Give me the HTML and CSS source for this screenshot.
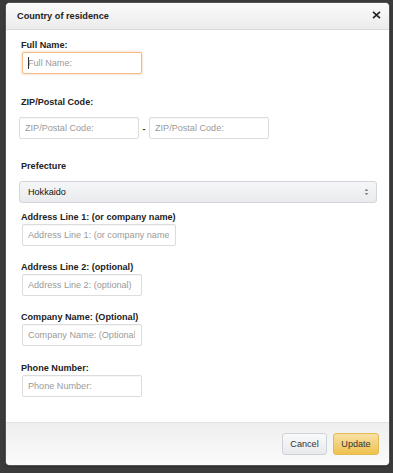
FILE: index.html
```html
<!DOCTYPE html>
<html>
<head>
<meta charset="utf-8">
<link rel="stylesheet" href="styles.css">
</head>
<body>
<div class="backdrop">
  <div class="modal">
    <div class="modal-header">
      <span class="modal-title">Country of residence</span>
      <svg class="close" width="9" height="8" viewBox="0 0 9 8"><path d="M1 0.8 L8 7.2 M8 0.8 L1 7.2" stroke="#222" stroke-width="1.6"/></svg>
    </div>
    <div class="modal-body">
      <label class="lbl lbl-first">Full Name:</label>
      <div class="focus-wrap">
        <input class="inp inp-focus w120" placeholder="Full Name:">
        <span class="caret"></span>
      </div>

      <label class="lbl lbl-gap22">ZIP/Postal Code:</label>
      <div class="zip-row">
        <input class="inp w120" placeholder="ZIP/Postal Code:">
        <span class="dash">-</span>
        <input class="inp w120" placeholder="ZIP/Postal Code:">
      </div>

      <label class="lbl lbl-gap21">Prefecture</label>
      <div class="select">
        <span>Hokkaido</span>
        <svg width="5" height="8" viewBox="0 0 5 8"><path d="M0.5 3 L2.5 0.8 L4.5 3 Z M0.5 5 L2.5 7.2 L4.5 5 Z" fill="#888"/></svg>
      </div>

      <label class="lbl lbl-gap8">Address Line 1: (or company name)</label>
      <input class="inp w154" placeholder="Address Line 1: (or company name)">

      <label class="lbl lbl-gap15">Address Line 2: (optional)</label>
      <input class="inp w120" placeholder="Address Line 2: (optional)">

      <label class="lbl lbl-gap15">Company Name: (Optional)</label>
      <input class="inp w120" placeholder="Company Name: (Optional)">

      <label class="lbl lbl-gap16">Phone Number:</label>
      <input class="inp w120" placeholder="Phone Number:">
    </div>
    <div class="modal-footer">
      <button class="btn btn-cancel">Cancel</button>
      <button class="btn btn-update">Update</button>
    </div>
  </div>
</div>
</body>
</html>
```

FILE: styles.css
```css
* { box-sizing: border-box; }
html, body { margin: 0; padding: 0; }
body {
  font-family: "Liberation Sans", Arial, sans-serif;
  font-size: 9.1px;
  color: #111;
  background: #3b3b3b;
}
.backdrop {
  width: 393px;
  height: 473px;
  padding: 3px 0 0 6px;
  background: #3b3b3b;
}
.modal {
  width: 383px;
  height: 462px;
  background: #fff;
  border-radius: 4px;
  box-shadow: 0 0 0 1px #555, 0 1px 3px rgba(0,0,0,.5);
  display: flex;
  flex-direction: column;
  overflow: hidden;
}
.modal-header {
  height: 27px;
  flex: none;
  background: linear-gradient(#fbfbfb, #ebebeb);
  border-bottom: 1px solid #dadada;
  display: flex;
  align-items: center;
  justify-content: space-between;
  padding: 0 8px 1px 11px;
}
.modal-title {
  font-weight: bold;
  font-size: 9.2px;
  color: #222;
}
.close { display: block; margin-top: -1px; }
.modal-body {
  flex: 1;
  padding: 9px 15px 0 15px;
  display: flex;
  flex-direction: column;
  align-items: flex-start;
}
.lbl {
  display: block;
  font-weight: bold;
  line-height: 12px;
  color: #222;
  margin-bottom: 1px;
}
.lbl-first { margin-top: 0; }
.lbl-gap22 { margin-top: 22px; margin-bottom: 9px; }
.lbl-gap21 { margin-top: 21px; margin-bottom: 9px; }
.lbl-gap8 { margin-top: 8px; }
.lbl-gap15 { margin-top: 15px; }
.lbl-gap16 { margin-top: 16px; }
.inp {
  display: block;
  height: 22px;
  margin-left: 1px;
  padding: 0 6px 0 5px;
  border: 1px solid #dcdcdc;
  border-radius: 2px;
  background: #fff;
  font-family: "Liberation Sans", Arial, sans-serif;
  font-size: 9.1px;
  color: #111;
  outline: none;
  box-shadow: inset 0 1px 0 rgba(0,0,0,.03);
}
.inp::placeholder { color: #9a9a9a; opacity: 1; }
.w120 { width: 120px; }
.w154 { width: 154px; }
.focus-wrap { position: relative; }
.inp-focus {
  border-color: #f0bd8a;
  box-shadow: 0 0 2px 1px rgba(240, 160, 80, .25);
}
.caret {
  position: absolute;
  left: 7px;
  top: 5px;
  width: 1px;
  height: 12px;
  background: #333;
}
.zip-row {
  display: flex;
  align-items: flex-start;
  margin-left: -2px;
}
.zip-row .inp { margin-left: 0; }
.dash {
  width: 10px;
  text-align: center;
  font-weight: bold;
  padding-top: 7px;
  color: #333;
}
.select {
  width: 358px;
  height: 22px;
  margin-left: -2px;
  border: 1px solid #d3d6da;
  border-radius: 3px;
  background: linear-gradient(#f5f6f8, #e9ebee);
  display: flex;
  align-items: center;
  justify-content: space-between;
  padding: 0 7px 0 8px;
  color: #111;
}
.modal-footer {
  flex: none;
  height: 43px;
  border-top: 1px solid #e2e2e2;
  background: linear-gradient(#efefef, #fafafa);
  display: flex;
  justify-content: flex-end;
  align-items: flex-start;
  gap: 6px;
  padding: 10px 10px 0 0;
}
.btn {
  height: 22px;
  border-radius: 3px;
  font-family: "Liberation Sans", Arial, sans-serif;
  font-size: 9.1px;
  color: #333;
  padding: 0;
  cursor: pointer;
}
.btn-cancel {
  width: 45px;
  border: 1px solid #cfd2d6;
  background: linear-gradient(#f8f9fa, #e8eaed);
}
.btn-update {
  width: 46px;
  border: 1px solid #e2bb55;
  background: linear-gradient(#f8e0a6, #f0c24d);
}
```
